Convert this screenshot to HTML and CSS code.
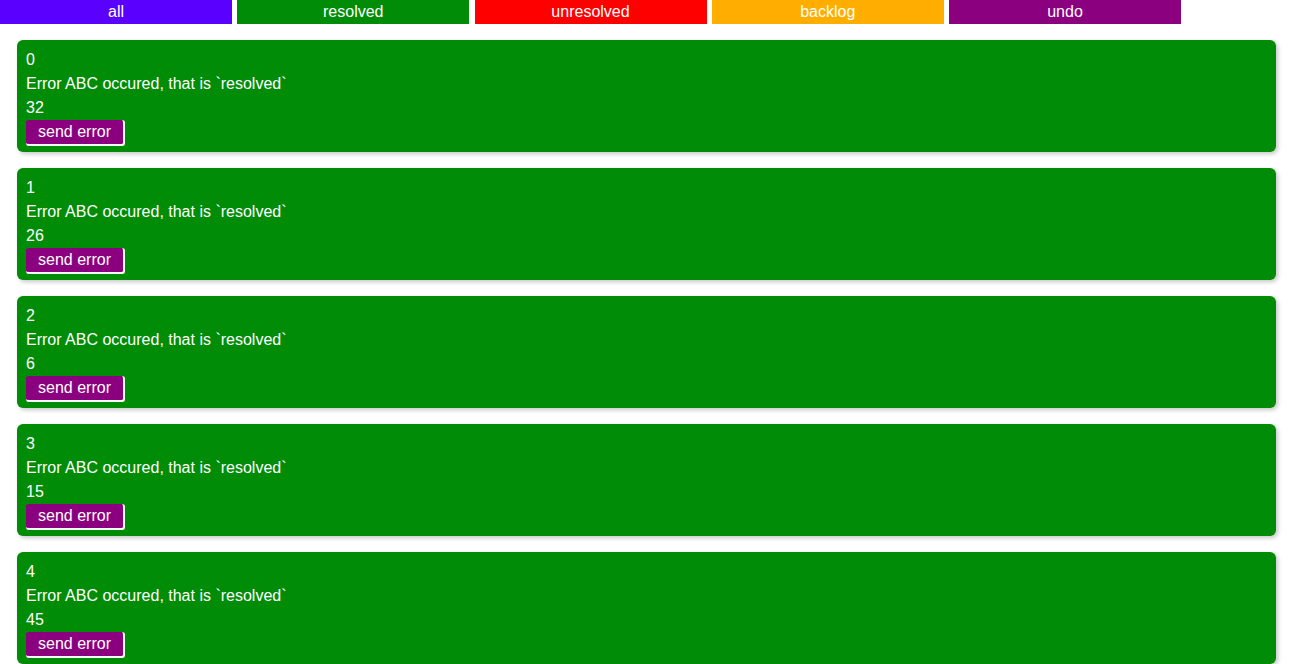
FILE: index.html
```html
<!DOCTYPE html>
<html>
<head>
<meta charset="utf-8">
<link rel="stylesheet" href="styles.css">
</head>
<body>
<nav class="tabs"><button class="tab tab-all">all</button> <button class="tab tab-resolved">resolved</button> <button class="tab tab-unresolved">unresolved</button> <button class="tab tab-backlog">backlog</button> <button class="tab tab-undo">undo</button></nav>
<main class="list">
  <div class="card">
    <div class="line">0</div>
    <div class="line">Error ABC occured, that is `resolved`</div>
    <div class="line">32</div>
    <button class="send">send error</button>
  </div>
  <div class="card">
    <div class="line">1</div>
    <div class="line">Error ABC occured, that is `resolved`</div>
    <div class="line">26</div>
    <button class="send">send error</button>
  </div>
  <div class="card">
    <div class="line">2</div>
    <div class="line">Error ABC occured, that is `resolved`</div>
    <div class="line">6</div>
    <button class="send">send error</button>
  </div>
  <div class="card">
    <div class="line">3</div>
    <div class="line">Error ABC occured, that is `resolved`</div>
    <div class="line">15</div>
    <button class="send">send error</button>
  </div>
  <div class="card">
    <div class="line">4</div>
    <div class="line">Error ABC occured, that is `resolved`</div>
    <div class="line">45</div>
    <button class="send">send error</button>
  </div>
</main>
</body>
</html>
```
FILE: styles.css
```css
html, body {
  margin: 0;
  padding: 0;
  background: #fff;
  font-family: "Liberation Sans", Arial, sans-serif;
  font-size: 16px;
}
.tabs {
  height: 24px;
  font-size: 16px;
  white-space: nowrap;
  word-spacing: 0.78px;
}
.tab {
  display: inline-block;
  width: 18%;
  height: 24px;
  margin: 0;
  padding: 0;
  border: none;
  color: #fff;
  font-family: "Liberation Sans", Arial, sans-serif;
  font-size: 16px;
  line-height: 24px;
  vertical-align: top;
  word-spacing: 0;
}
.tab-all { background: #5a00ff; }
.tab-resolved { background: #008c06; }
.tab-unresolved { background: #ff0000; }
.tab-backlog { background: #ffae00; }
.tab-undo { background: #8b007f; }

.list {
  display: flex;
  flex-direction: column;
  gap: 16px;
  padding: 16px 13px 16px 17px;
}
.card {
  background: #008c06;
  color: #fff;
  border-radius: 6px;
  padding: 8px 9px 6px 9px;
  box-shadow: 2px 2px 4px rgba(0, 0, 0, 0.22);
}
.line {
  line-height: 24px;
  height: 24px;
}
.send {
  display: block;
  width: 99px;
  height: 26px;
  margin: 0;
  padding: 0;
  background: #8b007f;
  color: #fff;
  font-family: "Liberation Sans", Arial, sans-serif;
  font-size: 16px;
  line-height: 24px;
  border: none;
  border-right: 2px solid #fff;
  border-bottom: 2px solid #fff;
  border-radius: 3px;
}
```
